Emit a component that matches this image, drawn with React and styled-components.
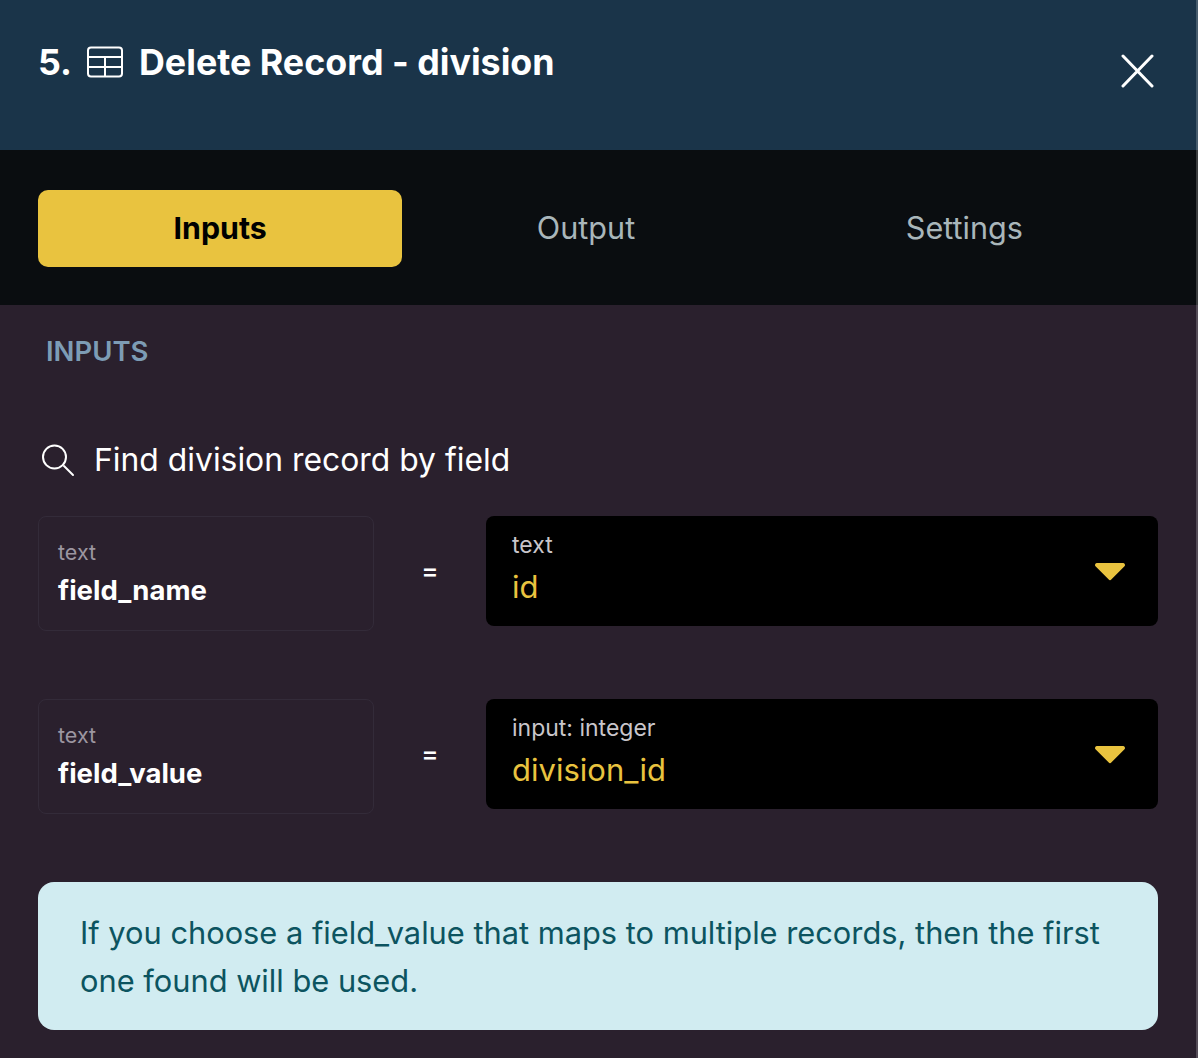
import styled, { createGlobalStyle } from "styled-components";

const GlobalStyle = createGlobalStyle`
  html, body {
    margin: 0;
    padding: 0;
    background: #2a202d;
  }
  * {
    box-sizing: border-box;
  }
`;

const Panel = styled.div`
  position: relative;
  width: 1198px;
  height: 1058px;
  overflow: hidden;
  display: flex;
  flex-direction: column;
  background: #2a202d;
  font-family: Inter, "Liberation Sans", sans-serif;

  &::after {
    content: "";
    position: absolute;
    top: 0;
    right: 0;
    bottom: 0;
    width: 2px;
    background: rgba(255, 255, 255, 0.2);
  }
`;

const Header = styled.header`
  height: 150px;
  flex: none;
  display: flex;
  align-items: flex-start;
  justify-content: space-between;
  padding: 40px 44px 0 38px;
  background: #1a3449;
  color: #fff;
`;

const Title = styled.h1`
  margin: 0;
  display: flex;
  align-items: center;
  gap: 14.5px;
  font-size: 35.8px;
  line-height: 44px;
  font-weight: 700;
`;

const CloseButton = styled.button`
  margin-top: 14px;
  padding: 0;
  width: 34px;
  height: 34px;
  border: 0;
  background: none;
  color: #fff;
`;

const TabBar = styled.nav`
  height: 155px;
  flex: none;
  display: grid;
  grid-template-columns: repeat(3, 1fr);
  gap: 14px;
  padding: 40px 39px 38px 38px;
  background: #0a0d10;
`;

const Tab = styled.div`
  display: flex;
  align-items: center;
  justify-content: center;
  padding-right: ${({ $active }) => ($active ? "0" : "25px")};
  padding-bottom: 2px;
  border-radius: 10px;
  font-size: ${({ $active }) => ($active ? "30.3px" : "30.6px")};
  font-weight: ${({ $active }) => ($active ? 700 : 400)};
  color: ${({ $active }) => ($active ? "#000" : "#a9b6ba")};
  background: ${({ $active }) => ($active ? "#e9c33f" : "transparent")};
`;

const Body = styled.main`
  flex: 1;
  display: flex;
  flex-direction: column;
  padding: 29px 40px 0 38px;
`;

const SectionLabel = styled.div`
  padding-left: 8px;
  font-size: 27.5px;
  line-height: 34px;
  font-weight: 600;
  color: #7d9cb5;
`;

const SearchLine = styled.div`
  margin-top: 72px;
  display: flex;
  align-items: center;
  gap: 19px;
  padding-left: 3px;
  font-size: 31.85px;
  line-height: 40px;
  color: #fff;
`;

const FieldRow = styled.div`
  display: grid;
  grid-template-columns: 336px 112px 672px;
  margin-top: ${({ $first }) => ($first ? "36px" : "68px")};
`;

const FieldName = styled.div`
  height: 115px;
  padding: 21px 19px 0;
  border: 1px solid #332b39;
  border-radius: 8px;
`;

const TypeLabel = styled.div`
  font-size: 21.5px;
  line-height: 28px;
  color: #9c96a0;
`;

const NameLabel = styled.div`
  margin-top: 7px;
  font-size: 27.5px;
  line-height: 34px;
  font-weight: 700;
  color: #fff;
`;

const Equals = styled.div`
  height: 108px;
  display: flex;
  align-items: center;
  justify-content: center;
  font-size: 26px;
  font-weight: 500;
  color: #fff;
`;

const ValueSelect = styled.div`
  height: 110px;
  display: flex;
  align-items: center;
  justify-content: space-between;
  padding: 0 32px 0 26px;
  border-radius: 8px;
  background: #000;
`;

const ValueText = styled.div`
  display: flex;
  flex-direction: column;
  gap: 7px;
  padding-bottom: 5px;
`;

const ValueType = styled.div`
  font-size: 23px;
  line-height: 30px;
  color: #c9c6cb;
`;

const Value = styled.div`
  font-size: 31px;
  line-height: 40px;
  color: #e9c33f;
`;

const Notice = styled.div`
  margin-top: 68px;
  width: 1120px;
  height: 148px;
  padding: 27px 42px;
  border-radius: 16px;
  background: #d1ecf1;
  color: #0c5460;
  font-size: 30.8px;
  line-height: 48px;
`;

function TableIcon() {
  return (
    <svg width="38" height="32" viewBox="0 0 38 32" fill="none" stroke="currentColor" strokeWidth="2">
      <rect x="1" y="1.5" width="34" height="29" rx="3" />
      <path d="M1 11h34M1 21h34M18 11v19.5" />
    </svg>
  );
}

function CloseIcon() {
  return (
    <svg width="34" height="34" viewBox="0 0 34 34" fill="none" stroke="currentColor" strokeWidth="3" strokeLinecap="round">
      <path d="M3 2l29 30M32 2L3 32" />
    </svg>
  );
}

function SearchIcon() {
  return (
    <svg width="34" height="34" viewBox="0 0 34 34" fill="none" stroke="currentColor" strokeWidth="2" strokeLinecap="round">
      <circle cx="13.5" cy="14" r="11.5" />
      <path d="M23 23l9 9" />
    </svg>
  );
}

function CaretIcon() {
  return (
    <svg width="32" height="19" viewBox="0 0 32 19" fill="#e9c33f">
      <path d="M3 1h26a2 2 0 0 1 1.5 3.3L17.5 17.3a2 2 0 0 1-3 0L1.5 4.3A2 2 0 0 1 3 1z" />
    </svg>
  );
}

const fields = [
  { name: "field_name", type: "text", value: "id" },
  { name: "field_value", type: "input: integer", value: "division_id" },
];

export default function App() {
  return (
    <Panel>
      <GlobalStyle />
      <Header>
        <Title>
          5.
          <TableIcon />
          Delete Record - division
        </Title>
        <CloseButton aria-label="Close">
          <CloseIcon />
        </CloseButton>
      </Header>
      <TabBar>
        <Tab $active>Inputs</Tab>
        <Tab>Output</Tab>
        <Tab>Settings</Tab>
      </TabBar>
      <Body>
        <SectionLabel>INPUTS</SectionLabel>
        <SearchLine>
          <SearchIcon />
          Find division record by field
        </SearchLine>
        {fields.map((field, i) => (
          <FieldRow key={field.name} $first={i === 0}>
            <FieldName>
              <TypeLabel>text</TypeLabel>
              <NameLabel>{field.name}</NameLabel>
            </FieldName>
            <Equals>=</Equals>
            <ValueSelect>
              <ValueText>
                <ValueType>{field.type}</ValueType>
                <Value>{field.value}</Value>
              </ValueText>
              <CaretIcon />
            </ValueSelect>
          </FieldRow>
        ))}
        <Notice>If you choose a field_value that maps to multiple records, then the first one found will be used.</Notice>
      </Body>
    </Panel>
  );
}
